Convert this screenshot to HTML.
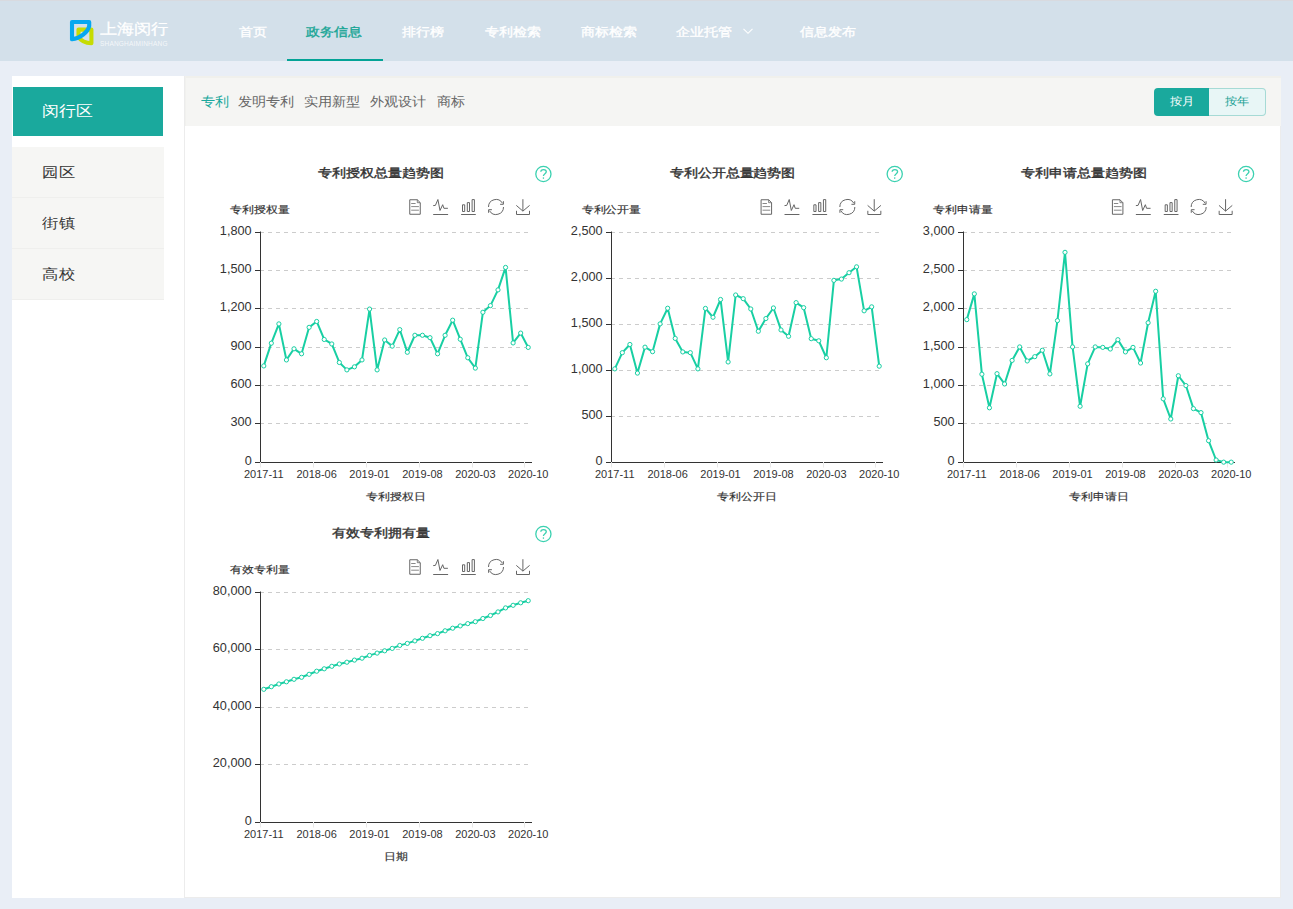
<!DOCTYPE html>
<html><head><meta charset="utf-8">
<style>
*{margin:0;padding:0;box-sizing:border-box}
html,body{width:1293px;height:909px;overflow:hidden}
body{background:#e9eef6;font-family:"Liberation Sans",sans-serif;position:relative;color:#333}
.abs{position:absolute}
.sq{display:inline-block;transform:scaleY(0.86);transform-origin:50% 50%}
#hdr{position:absolute;left:0;top:0;width:1293px;height:61px;background:#d3e0ea;border-top:1px solid #d8dadf}
.nav{position:absolute;top:21px;font-size:14px;color:#fff;white-space:nowrap;line-height:20px;font-weight:normal;-webkit-text-stroke:0.4px currentColor}
.nav.on{color:#17a595}
#uline{position:absolute;left:287px;top:58px;width:96px;height:2px;background:#04a396}
#side{position:absolute;left:12px;top:76px;width:172px;height:822px;background:#fff}
#main{position:absolute;left:184px;top:76px;width:1097px;height:822px;background:#fff;border-left:1px solid #ececec;border-right:1px solid #ececec;border-bottom:1px solid #ececec}
.sitem{position:absolute;left:0;width:152px;height:51px;background:#f6f6f4;border-bottom:1px solid #efefed;font-size:16.5px;color:#333;line-height:51px;padding-left:30px;white-space:nowrap}
#tabbar{position:absolute;left:0;top:0;width:1096px;height:50px;background:#f5f5f3;border-top:2px solid #f0f0ec;border-left:1px solid #f1f1ee}
.tab{position:absolute;top:14px;font-size:14px;color:#666;line-height:18px;white-space:nowrap}
.tab .sq{transform:scaleY(0.92)}
.btn{position:absolute;top:10px;height:28px;font-size:12px;line-height:26px;text-align:center;white-space:nowrap}
</style></head><body>
<div id="hdr">
  <svg class="abs" style="left:64px;top:13px" width="36" height="36" viewBox="64 14 36 36">
    <path d="M78.5 37.2 L78.5 29.6 L91.4 29.6 L91.4 43.3 C86.5 43.1 81.2 41.2 78.5 37.2 Z" fill="none" stroke="#c6dc02" stroke-width="4.1" stroke-linejoin="round"/>
    <path d="M72 39.3 L72 22 L89.2 22 L89.2 26 C88 32 80 38.5 72 39.3 Z" fill="none" stroke="#05a8f0" stroke-width="4.1" stroke-linejoin="round"/>
  </svg>
  <div class="abs" style="left:100px;top:18px;font-size:17px;color:#fff;line-height:22px;font-weight:normal;white-space:nowrap;-webkit-text-stroke:0.3px #fff"><span class="sq" style="transform:scaleY(0.87)">上海闵行</span></div>
  <div class="abs" style="left:100px;top:38.5px;font-size:6.5px;color:#fff;line-height:8px;letter-spacing:0.2px;white-space:nowrap;opacity:.75">SHANGHAIMINHANG</div>
  <div class="nav" style="left:239px"><span class="sq">首页</span></div>
  <div class="nav on" style="left:306px"><span class="sq">政务信息</span></div>
  <div class="nav" style="left:402px"><span class="sq">排行榜</span></div>
  <div class="nav" style="left:485px"><span class="sq">专利检索</span></div>
  <div class="nav" style="left:581px"><span class="sq">商标检索</span></div>
  <div class="nav" style="left:676px"><span class="sq">企业托管</span></div>
  <svg class="abs" style="left:742px;top:26px" width="12" height="9" viewBox="0 0 12 9"><path d="M1.5 1.8 L6 6.3 L10.5 1.8" fill="none" stroke="#fff" stroke-width="1.1"/></svg>
  <div class="nav" style="left:800px"><span class="sq">信息发布</span></div>
  <div id="uline"></div>
</div>

<div id="side">
  <div class="abs" style="left:1px;top:11px;width:150px;height:49px;background:#1aa99d;color:#fff;font-size:16.5px;line-height:49px;padding-left:28.7px;white-space:nowrap"><span class="sq" style="transform:scaleY(0.89)">闵行区</span></div>
  <div class="sitem" style="top:71px"><span class="sq">园区</span></div>
  <div class="sitem" style="top:122px"><span class="sq">街镇</span></div>
  <div class="sitem" style="top:173px"><span class="sq">高校</span></div>
</div>

<div id="main">
  <div id="tabbar">
    <div class="tab" style="left:15px;color:#1aa99d"><span class="sq">专利</span></div>
    <div class="tab" style="left:52px"><span class="sq">发明专利</span></div>
    <div class="tab" style="left:118px"><span class="sq">实用新型</span></div>
    <div class="tab" style="left:184px"><span class="sq">外观设计</span></div>
    <div class="tab" style="left:251px"><span class="sq">商标</span></div>
    <div class="btn" style="left:968px;width:55px;background:#1aa99d;color:#fff;border-radius:4px 0 0 4px"><span class="sq" style="transform:scaleY(0.9)">按月</span></div>
    <div class="btn" style="left:1023px;width:57px;background:#e8f6f6;color:#17a093;border:1px solid #a6dad5;border-left:none;border-radius:0 4px 4px 0;line-height:25px"><span class="sq" style="transform:scaleY(0.9)">按年</span></div>
  </div>
</div>
<svg id="charts" width="1293" height="909" viewBox="0 0 1293 909" style="position:absolute;left:0;top:0" font-family="Liberation Sans, sans-serif">
<text x="381.20" y="178.14" font-size="14" font-weight="normal" fill="#333" text-anchor="middle" stroke="#333" stroke-width="0.45" transform="matrix(0.98,0,0,0.84,7.624,27.696)">专利授权总量趋势图</text>
<circle cx="543.40" cy="174.00" r="7.6" fill="none" stroke="#3bd1b0" stroke-width="1.3"/>
<path d="M540.80 171.80 C540.80 168.80 546.30 168.80 546.30 171.80 C546.30 173.60 543.40 173.80 543.40 176.00" fill="none" stroke="#3bd1b0" stroke-width="1.3"/>
<circle cx="543.40" cy="178.10" r="0.8" fill="#3bd1b0"/>
<text x="230.30" y="213.92" font-size="12" font-weight="normal" fill="#333" text-anchor="start" stroke="#333" stroke-width="0.2" transform="matrix(1.0,0,0,0.84,0.000,33.536)">专利授权量</text>
<g transform="translate(0.00,0.00)" fill="none" stroke="#666" stroke-width="1"><path d="M409.75 199.75 H417.3 L420.25 202.7 V214.25 H409.75 Z"/><path d="M417.3 199.75 V202.7 H420.25" stroke-width="0.8"/><path d="M411.2 203.5 H415.6 M411.2 206.6 H418.9 M411.2 210.2 H418.9" stroke="#888"/><path d="M433.2 205.6 L435.4 205.4 L437.9 199.5 L440 210.5 L442.7 204.7 L443.9 208.3 L447.9 208.3"/><path d="M433.2 214.5 H448.1"/><path d="M462.5 211.5 V204.8 H464.7 V211.5 Z M467.3 211.5 V202.6 H469.5 V211.5 Z M472.1 211.5 V199.6 H474.4 V211.5 Z"/><path d="M461.1 214.5 H475.8"/><path d="M488.5 207 A7.5 7.5 0 0 1 502.5 203.25"/><path d="M503.5 207 A7.5 7.5 0 0 1 489.5 210.75"/><path d="M500.1 204.3 H503.4 V201.2"/><path d="M491.9 209.7 H488.6 V212.8"/><path d="M522.9 199.2 V211.1 M516.3 205.4 L522.9 211.1 L529.6 205.4 M516.5 210.8 V214.5 H529.5 V210.8"/></g>
<line x1="260.5" y1="423.5" x2="532" y2="423.5" stroke="#cccccc" stroke-dasharray="4 4" stroke-dashoffset="0.5"/>
<line x1="260.5" y1="385.5" x2="532" y2="385.5" stroke="#cccccc" stroke-dasharray="4 4" stroke-dashoffset="0.5"/>
<line x1="260.5" y1="347.5" x2="532" y2="347.5" stroke="#cccccc" stroke-dasharray="4 4" stroke-dashoffset="0.5"/>
<line x1="260.5" y1="308.5" x2="532" y2="308.5" stroke="#cccccc" stroke-dasharray="4 4" stroke-dashoffset="0.5"/>
<line x1="260.5" y1="270.5" x2="532" y2="270.5" stroke="#cccccc" stroke-dasharray="4 4" stroke-dashoffset="0.5"/>
<line x1="260.5" y1="232.5" x2="532" y2="232.5" stroke="#cccccc" stroke-dasharray="4 4" stroke-dashoffset="0.5"/>
<line x1="255" y1="462.5" x2="260" y2="462.5" stroke="#333"/>
<text x="251.70" y="464.80" font-size="12" fill="#333" text-anchor="end" transform="matrix(1.06,0,0,1,-15.102,0)">0</text>
<line x1="255" y1="423.5" x2="260" y2="423.5" stroke="#333"/>
<text x="251.70" y="425.80" font-size="12" fill="#333" text-anchor="end" transform="matrix(1.06,0,0,1,-15.102,0)">300</text>
<line x1="255" y1="385.5" x2="260" y2="385.5" stroke="#333"/>
<text x="251.70" y="387.80" font-size="12" fill="#333" text-anchor="end" transform="matrix(1.06,0,0,1,-15.102,0)">600</text>
<line x1="255" y1="347.5" x2="260" y2="347.5" stroke="#333"/>
<text x="251.70" y="349.80" font-size="12" fill="#333" text-anchor="end" transform="matrix(1.06,0,0,1,-15.102,0)">900</text>
<line x1="255" y1="308.5" x2="260" y2="308.5" stroke="#333"/>
<text x="251.70" y="310.80" font-size="12" fill="#333" text-anchor="end" transform="matrix(1.06,0,0,1,-15.102,0)">1,200</text>
<line x1="255" y1="270.5" x2="260" y2="270.5" stroke="#333"/>
<text x="251.70" y="272.80" font-size="12" fill="#333" text-anchor="end" transform="matrix(1.06,0,0,1,-15.102,0)">1,500</text>
<line x1="255" y1="232.5" x2="260" y2="232.5" stroke="#333"/>
<text x="251.70" y="234.80" font-size="12" fill="#333" text-anchor="end" transform="matrix(1.06,0,0,1,-15.102,0)">1,800</text>
<line x1="260.5" y1="231.5" x2="260.5" y2="462.5" stroke="#333"/>
<line x1="260" y1="462.5" x2="532" y2="462.5" stroke="#333"/>
<line x1="260.5" y1="462.0" x2="260.5" y2="467.5" stroke="#e8e8e8"/>
<text x="263.78" y="478.30" font-size="11" fill="#333" text-anchor="middle">2017-11</text>
<line x1="313.5" y1="462.0" x2="313.5" y2="467.5" stroke="#e8e8e8"/>
<text x="316.67" y="478.30" font-size="11" fill="#333" text-anchor="middle">2018-06</text>
<line x1="366.5" y1="462.0" x2="366.5" y2="467.5" stroke="#e8e8e8"/>
<text x="369.56" y="478.30" font-size="11" fill="#333" text-anchor="middle">2019-01</text>
<line x1="419.5" y1="462.0" x2="419.5" y2="467.5" stroke="#e8e8e8"/>
<text x="422.44" y="478.30" font-size="11" fill="#333" text-anchor="middle">2019-08</text>
<line x1="472.5" y1="462.0" x2="472.5" y2="467.5" stroke="#e8e8e8"/>
<text x="475.33" y="478.30" font-size="11" fill="#333" text-anchor="middle">2020-03</text>
<line x1="524.5" y1="462.0" x2="524.5" y2="467.5" stroke="#e8e8e8"/>
<text x="528.22" y="478.30" font-size="11" fill="#333" text-anchor="middle">2020-10</text>
<text x="396.00" y="500.52" font-size="12" font-weight="normal" fill="#333" text-anchor="middle" stroke="#333" stroke-width="0.2" transform="matrix(1.0,0,0,0.84,0.000,79.392)">专利授权日</text>
<path d="M263.78 365.93 L271.33 343.19 L278.89 323.89 L286.44 359.93 L294.00 348.81 L301.56 353.79 L309.11 327.34 L316.67 321.47 L324.22 339.48 L331.78 343.96 L339.33 362.48 L346.89 369.89 L354.44 366.83 L362.00 359.93 L369.56 309.07 L377.11 369.89 L384.67 339.99 L392.22 346.13 L399.78 329.64 L407.33 352.26 L414.89 335.27 L422.44 335.27 L430.00 337.69 L437.56 353.79 L445.11 335.27 L452.67 320.19 L460.22 339.23 L467.78 357.76 L475.33 368.11 L482.89 312.27 L490.44 305.62 L498.00 289.91 L505.56 267.42 L513.11 342.93 L520.67 333.09 L528.22 347.41" fill="none" stroke="#18cfa3" stroke-width="2" stroke-linejoin="round"/>
<circle cx="263.78" cy="365.93" r="2.1" fill="#fff" stroke="#18cfa3" stroke-width="1"/>
<circle cx="271.33" cy="343.19" r="2.1" fill="#fff" stroke="#18cfa3" stroke-width="1"/>
<circle cx="278.89" cy="323.89" r="2.1" fill="#fff" stroke="#18cfa3" stroke-width="1"/>
<circle cx="286.44" cy="359.93" r="2.1" fill="#fff" stroke="#18cfa3" stroke-width="1"/>
<circle cx="294.00" cy="348.81" r="2.1" fill="#fff" stroke="#18cfa3" stroke-width="1"/>
<circle cx="301.56" cy="353.79" r="2.1" fill="#fff" stroke="#18cfa3" stroke-width="1"/>
<circle cx="309.11" cy="327.34" r="2.1" fill="#fff" stroke="#18cfa3" stroke-width="1"/>
<circle cx="316.67" cy="321.47" r="2.1" fill="#fff" stroke="#18cfa3" stroke-width="1"/>
<circle cx="324.22" cy="339.48" r="2.1" fill="#fff" stroke="#18cfa3" stroke-width="1"/>
<circle cx="331.78" cy="343.96" r="2.1" fill="#fff" stroke="#18cfa3" stroke-width="1"/>
<circle cx="339.33" cy="362.48" r="2.1" fill="#fff" stroke="#18cfa3" stroke-width="1"/>
<circle cx="346.89" cy="369.89" r="2.1" fill="#fff" stroke="#18cfa3" stroke-width="1"/>
<circle cx="354.44" cy="366.83" r="2.1" fill="#fff" stroke="#18cfa3" stroke-width="1"/>
<circle cx="362.00" cy="359.93" r="2.1" fill="#fff" stroke="#18cfa3" stroke-width="1"/>
<circle cx="369.56" cy="309.07" r="2.1" fill="#fff" stroke="#18cfa3" stroke-width="1"/>
<circle cx="377.11" cy="369.89" r="2.1" fill="#fff" stroke="#18cfa3" stroke-width="1"/>
<circle cx="384.67" cy="339.99" r="2.1" fill="#fff" stroke="#18cfa3" stroke-width="1"/>
<circle cx="392.22" cy="346.13" r="2.1" fill="#fff" stroke="#18cfa3" stroke-width="1"/>
<circle cx="399.78" cy="329.64" r="2.1" fill="#fff" stroke="#18cfa3" stroke-width="1"/>
<circle cx="407.33" cy="352.26" r="2.1" fill="#fff" stroke="#18cfa3" stroke-width="1"/>
<circle cx="414.89" cy="335.27" r="2.1" fill="#fff" stroke="#18cfa3" stroke-width="1"/>
<circle cx="422.44" cy="335.27" r="2.1" fill="#fff" stroke="#18cfa3" stroke-width="1"/>
<circle cx="430.00" cy="337.69" r="2.1" fill="#fff" stroke="#18cfa3" stroke-width="1"/>
<circle cx="437.56" cy="353.79" r="2.1" fill="#fff" stroke="#18cfa3" stroke-width="1"/>
<circle cx="445.11" cy="335.27" r="2.1" fill="#fff" stroke="#18cfa3" stroke-width="1"/>
<circle cx="452.67" cy="320.19" r="2.1" fill="#fff" stroke="#18cfa3" stroke-width="1"/>
<circle cx="460.22" cy="339.23" r="2.1" fill="#fff" stroke="#18cfa3" stroke-width="1"/>
<circle cx="467.78" cy="357.76" r="2.1" fill="#fff" stroke="#18cfa3" stroke-width="1"/>
<circle cx="475.33" cy="368.11" r="2.1" fill="#fff" stroke="#18cfa3" stroke-width="1"/>
<circle cx="482.89" cy="312.27" r="2.1" fill="#fff" stroke="#18cfa3" stroke-width="1"/>
<circle cx="490.44" cy="305.62" r="2.1" fill="#fff" stroke="#18cfa3" stroke-width="1"/>
<circle cx="498.00" cy="289.91" r="2.1" fill="#fff" stroke="#18cfa3" stroke-width="1"/>
<circle cx="505.56" cy="267.42" r="2.1" fill="#fff" stroke="#18cfa3" stroke-width="1"/>
<circle cx="513.11" cy="342.93" r="2.1" fill="#fff" stroke="#18cfa3" stroke-width="1"/>
<circle cx="520.67" cy="333.09" r="2.1" fill="#fff" stroke="#18cfa3" stroke-width="1"/>
<circle cx="528.22" cy="347.41" r="2.1" fill="#fff" stroke="#18cfa3" stroke-width="1"/>
<text x="732.53" y="178.14" font-size="14" font-weight="normal" fill="#333" text-anchor="middle" stroke="#333" stroke-width="0.45" transform="matrix(0.98,0,0,0.84,14.651,27.696)">专利公开总量趋势图</text>
<circle cx="894.73" cy="174.00" r="7.6" fill="none" stroke="#3bd1b0" stroke-width="1.3"/>
<path d="M892.13 171.80 C892.13 168.80 897.63 168.80 897.63 171.80 C897.63 173.60 894.73 173.80 894.73 176.00" fill="none" stroke="#3bd1b0" stroke-width="1.3"/>
<circle cx="894.73" cy="178.10" r="0.8" fill="#3bd1b0"/>
<text x="581.63" y="213.92" font-size="12" font-weight="normal" fill="#333" text-anchor="start" stroke="#333" stroke-width="0.2" transform="matrix(1.0,0,0,0.84,0.000,33.536)">专利公开量</text>
<g transform="translate(351.33,0.00)" fill="none" stroke="#666" stroke-width="1"><path d="M409.75 199.75 H417.3 L420.25 202.7 V214.25 H409.75 Z"/><path d="M417.3 199.75 V202.7 H420.25" stroke-width="0.8"/><path d="M411.2 203.5 H415.6 M411.2 206.6 H418.9 M411.2 210.2 H418.9" stroke="#888"/><path d="M433.2 205.6 L435.4 205.4 L437.9 199.5 L440 210.5 L442.7 204.7 L443.9 208.3 L447.9 208.3"/><path d="M433.2 214.5 H448.1"/><path d="M462.5 211.5 V204.8 H464.7 V211.5 Z M467.3 211.5 V202.6 H469.5 V211.5 Z M472.1 211.5 V199.6 H474.4 V211.5 Z"/><path d="M461.1 214.5 H475.8"/><path d="M488.5 207 A7.5 7.5 0 0 1 502.5 203.25"/><path d="M503.5 207 A7.5 7.5 0 0 1 489.5 210.75"/><path d="M500.1 204.3 H503.4 V201.2"/><path d="M491.9 209.7 H488.6 V212.8"/><path d="M522.9 199.2 V211.1 M516.3 205.4 L522.9 211.1 L529.6 205.4 M516.5 210.8 V214.5 H529.5 V210.8"/></g>
<line x1="611.5" y1="416.5" x2="883" y2="416.5" stroke="#cccccc" stroke-dasharray="4 4" stroke-dashoffset="0.5"/>
<line x1="611.5" y1="370.5" x2="883" y2="370.5" stroke="#cccccc" stroke-dasharray="4 4" stroke-dashoffset="0.5"/>
<line x1="611.5" y1="324.5" x2="883" y2="324.5" stroke="#cccccc" stroke-dasharray="4 4" stroke-dashoffset="0.5"/>
<line x1="611.5" y1="278.5" x2="883" y2="278.5" stroke="#cccccc" stroke-dasharray="4 4" stroke-dashoffset="0.5"/>
<line x1="611.5" y1="232.5" x2="883" y2="232.5" stroke="#cccccc" stroke-dasharray="4 4" stroke-dashoffset="0.5"/>
<line x1="606" y1="462.5" x2="611" y2="462.5" stroke="#333"/>
<text x="602.70" y="464.80" font-size="12" fill="#333" text-anchor="end" transform="matrix(1.06,0,0,1,-36.162,0)">0</text>
<line x1="606" y1="416.5" x2="611" y2="416.5" stroke="#333"/>
<text x="602.70" y="418.80" font-size="12" fill="#333" text-anchor="end" transform="matrix(1.06,0,0,1,-36.162,0)">500</text>
<line x1="606" y1="370.5" x2="611" y2="370.5" stroke="#333"/>
<text x="602.70" y="372.80" font-size="12" fill="#333" text-anchor="end" transform="matrix(1.06,0,0,1,-36.162,0)">1,000</text>
<line x1="606" y1="324.5" x2="611" y2="324.5" stroke="#333"/>
<text x="602.70" y="326.80" font-size="12" fill="#333" text-anchor="end" transform="matrix(1.06,0,0,1,-36.162,0)">1,500</text>
<line x1="606" y1="278.5" x2="611" y2="278.5" stroke="#333"/>
<text x="602.70" y="280.80" font-size="12" fill="#333" text-anchor="end" transform="matrix(1.06,0,0,1,-36.162,0)">2,000</text>
<line x1="606" y1="232.5" x2="611" y2="232.5" stroke="#333"/>
<text x="602.70" y="234.80" font-size="12" fill="#333" text-anchor="end" transform="matrix(1.06,0,0,1,-36.162,0)">2,500</text>
<line x1="611.5" y1="231.5" x2="611.5" y2="462.5" stroke="#333"/>
<line x1="611" y1="462.5" x2="883" y2="462.5" stroke="#333"/>
<line x1="611.5" y1="462.0" x2="611.5" y2="467.5" stroke="#e8e8e8"/>
<text x="614.78" y="478.30" font-size="11" fill="#333" text-anchor="middle">2017-11</text>
<line x1="664.5" y1="462.0" x2="664.5" y2="467.5" stroke="#e8e8e8"/>
<text x="667.67" y="478.30" font-size="11" fill="#333" text-anchor="middle">2018-06</text>
<line x1="717.5" y1="462.0" x2="717.5" y2="467.5" stroke="#e8e8e8"/>
<text x="720.56" y="478.30" font-size="11" fill="#333" text-anchor="middle">2019-01</text>
<line x1="770.5" y1="462.0" x2="770.5" y2="467.5" stroke="#e8e8e8"/>
<text x="773.44" y="478.30" font-size="11" fill="#333" text-anchor="middle">2019-08</text>
<line x1="823.5" y1="462.0" x2="823.5" y2="467.5" stroke="#e8e8e8"/>
<text x="826.33" y="478.30" font-size="11" fill="#333" text-anchor="middle">2020-03</text>
<line x1="875.5" y1="462.0" x2="875.5" y2="467.5" stroke="#e8e8e8"/>
<text x="879.22" y="478.30" font-size="11" fill="#333" text-anchor="middle">2020-10</text>
<text x="747.00" y="500.52" font-size="12" font-weight="normal" fill="#333" text-anchor="middle" stroke="#333" stroke-width="0.2" transform="matrix(1.0,0,0,0.84,0.000,79.392)">专利公开日</text>
<path d="M614.78 368.86 L622.33 352.67 L629.89 344.48 L637.44 373.09 L645.00 347.15 L652.56 351.66 L660.11 323.87 L667.67 308.23 L675.22 338.41 L682.78 351.93 L690.33 352.67 L697.89 368.86 L705.44 308.42 L713.00 317.25 L720.56 299.49 L728.11 361.96 L735.67 294.99 L743.22 298.67 L750.78 308.97 L758.33 331.23 L765.89 318.54 L773.44 307.96 L781.00 329.95 L788.56 336.29 L796.11 302.62 L803.67 307.68 L811.22 338.69 L818.78 340.80 L826.33 357.73 L833.89 280.36 L841.44 279.07 L849.00 272.72 L856.56 266.83 L864.11 310.81 L871.67 306.85 L879.22 366.19" fill="none" stroke="#18cfa3" stroke-width="2" stroke-linejoin="round"/>
<circle cx="614.78" cy="368.86" r="2.1" fill="#fff" stroke="#18cfa3" stroke-width="1"/>
<circle cx="622.33" cy="352.67" r="2.1" fill="#fff" stroke="#18cfa3" stroke-width="1"/>
<circle cx="629.89" cy="344.48" r="2.1" fill="#fff" stroke="#18cfa3" stroke-width="1"/>
<circle cx="637.44" cy="373.09" r="2.1" fill="#fff" stroke="#18cfa3" stroke-width="1"/>
<circle cx="645.00" cy="347.15" r="2.1" fill="#fff" stroke="#18cfa3" stroke-width="1"/>
<circle cx="652.56" cy="351.66" r="2.1" fill="#fff" stroke="#18cfa3" stroke-width="1"/>
<circle cx="660.11" cy="323.87" r="2.1" fill="#fff" stroke="#18cfa3" stroke-width="1"/>
<circle cx="667.67" cy="308.23" r="2.1" fill="#fff" stroke="#18cfa3" stroke-width="1"/>
<circle cx="675.22" cy="338.41" r="2.1" fill="#fff" stroke="#18cfa3" stroke-width="1"/>
<circle cx="682.78" cy="351.93" r="2.1" fill="#fff" stroke="#18cfa3" stroke-width="1"/>
<circle cx="690.33" cy="352.67" r="2.1" fill="#fff" stroke="#18cfa3" stroke-width="1"/>
<circle cx="697.89" cy="368.86" r="2.1" fill="#fff" stroke="#18cfa3" stroke-width="1"/>
<circle cx="705.44" cy="308.42" r="2.1" fill="#fff" stroke="#18cfa3" stroke-width="1"/>
<circle cx="713.00" cy="317.25" r="2.1" fill="#fff" stroke="#18cfa3" stroke-width="1"/>
<circle cx="720.56" cy="299.49" r="2.1" fill="#fff" stroke="#18cfa3" stroke-width="1"/>
<circle cx="728.11" cy="361.96" r="2.1" fill="#fff" stroke="#18cfa3" stroke-width="1"/>
<circle cx="735.67" cy="294.99" r="2.1" fill="#fff" stroke="#18cfa3" stroke-width="1"/>
<circle cx="743.22" cy="298.67" r="2.1" fill="#fff" stroke="#18cfa3" stroke-width="1"/>
<circle cx="750.78" cy="308.97" r="2.1" fill="#fff" stroke="#18cfa3" stroke-width="1"/>
<circle cx="758.33" cy="331.23" r="2.1" fill="#fff" stroke="#18cfa3" stroke-width="1"/>
<circle cx="765.89" cy="318.54" r="2.1" fill="#fff" stroke="#18cfa3" stroke-width="1"/>
<circle cx="773.44" cy="307.96" r="2.1" fill="#fff" stroke="#18cfa3" stroke-width="1"/>
<circle cx="781.00" cy="329.95" r="2.1" fill="#fff" stroke="#18cfa3" stroke-width="1"/>
<circle cx="788.56" cy="336.29" r="2.1" fill="#fff" stroke="#18cfa3" stroke-width="1"/>
<circle cx="796.11" cy="302.62" r="2.1" fill="#fff" stroke="#18cfa3" stroke-width="1"/>
<circle cx="803.67" cy="307.68" r="2.1" fill="#fff" stroke="#18cfa3" stroke-width="1"/>
<circle cx="811.22" cy="338.69" r="2.1" fill="#fff" stroke="#18cfa3" stroke-width="1"/>
<circle cx="818.78" cy="340.80" r="2.1" fill="#fff" stroke="#18cfa3" stroke-width="1"/>
<circle cx="826.33" cy="357.73" r="2.1" fill="#fff" stroke="#18cfa3" stroke-width="1"/>
<circle cx="833.89" cy="280.36" r="2.1" fill="#fff" stroke="#18cfa3" stroke-width="1"/>
<circle cx="841.44" cy="279.07" r="2.1" fill="#fff" stroke="#18cfa3" stroke-width="1"/>
<circle cx="849.00" cy="272.72" r="2.1" fill="#fff" stroke="#18cfa3" stroke-width="1"/>
<circle cx="856.56" cy="266.83" r="2.1" fill="#fff" stroke="#18cfa3" stroke-width="1"/>
<circle cx="864.11" cy="310.81" r="2.1" fill="#fff" stroke="#18cfa3" stroke-width="1"/>
<circle cx="871.67" cy="306.85" r="2.1" fill="#fff" stroke="#18cfa3" stroke-width="1"/>
<circle cx="879.22" cy="366.19" r="2.1" fill="#fff" stroke="#18cfa3" stroke-width="1"/>
<text x="1083.87" y="178.14" font-size="14" font-weight="normal" fill="#333" text-anchor="middle" stroke="#333" stroke-width="0.45" transform="matrix(0.98,0,0,0.84,21.677,27.696)">专利申请总量趋势图</text>
<circle cx="1246.07" cy="174.00" r="7.6" fill="none" stroke="#3bd1b0" stroke-width="1.3"/>
<path d="M1243.47 171.80 C1243.47 168.80 1248.97 168.80 1248.97 171.80 C1248.97 173.60 1246.07 173.80 1246.07 176.00" fill="none" stroke="#3bd1b0" stroke-width="1.3"/>
<circle cx="1246.07" cy="178.10" r="0.8" fill="#3bd1b0"/>
<text x="932.97" y="213.92" font-size="12" font-weight="normal" fill="#333" text-anchor="start" stroke="#333" stroke-width="0.2" transform="matrix(1.0,0,0,0.84,0.000,33.536)">专利申请量</text>
<g transform="translate(702.67,0.00)" fill="none" stroke="#666" stroke-width="1"><path d="M409.75 199.75 H417.3 L420.25 202.7 V214.25 H409.75 Z"/><path d="M417.3 199.75 V202.7 H420.25" stroke-width="0.8"/><path d="M411.2 203.5 H415.6 M411.2 206.6 H418.9 M411.2 210.2 H418.9" stroke="#888"/><path d="M433.2 205.6 L435.4 205.4 L437.9 199.5 L440 210.5 L442.7 204.7 L443.9 208.3 L447.9 208.3"/><path d="M433.2 214.5 H448.1"/><path d="M462.5 211.5 V204.8 H464.7 V211.5 Z M467.3 211.5 V202.6 H469.5 V211.5 Z M472.1 211.5 V199.6 H474.4 V211.5 Z"/><path d="M461.1 214.5 H475.8"/><path d="M488.5 207 A7.5 7.5 0 0 1 502.5 203.25"/><path d="M503.5 207 A7.5 7.5 0 0 1 489.5 210.75"/><path d="M500.1 204.3 H503.4 V201.2"/><path d="M491.9 209.7 H488.6 V212.8"/><path d="M522.9 199.2 V211.1 M516.3 205.4 L522.9 211.1 L529.6 205.4 M516.5 210.8 V214.5 H529.5 V210.8"/></g>
<line x1="963.5" y1="423.5" x2="1235" y2="423.5" stroke="#cccccc" stroke-dasharray="4 4" stroke-dashoffset="0.5"/>
<line x1="963.5" y1="385.5" x2="1235" y2="385.5" stroke="#cccccc" stroke-dasharray="4 4" stroke-dashoffset="0.5"/>
<line x1="963.5" y1="347.5" x2="1235" y2="347.5" stroke="#cccccc" stroke-dasharray="4 4" stroke-dashoffset="0.5"/>
<line x1="963.5" y1="308.5" x2="1235" y2="308.5" stroke="#cccccc" stroke-dasharray="4 4" stroke-dashoffset="0.5"/>
<line x1="963.5" y1="270.5" x2="1235" y2="270.5" stroke="#cccccc" stroke-dasharray="4 4" stroke-dashoffset="0.5"/>
<line x1="963.5" y1="232.5" x2="1235" y2="232.5" stroke="#cccccc" stroke-dasharray="4 4" stroke-dashoffset="0.5"/>
<line x1="958" y1="462.5" x2="963" y2="462.5" stroke="#333"/>
<text x="954.70" y="464.80" font-size="12" fill="#333" text-anchor="end" transform="matrix(1.06,0,0,1,-57.282,0)">0</text>
<line x1="958" y1="423.5" x2="963" y2="423.5" stroke="#333"/>
<text x="954.70" y="425.80" font-size="12" fill="#333" text-anchor="end" transform="matrix(1.06,0,0,1,-57.282,0)">500</text>
<line x1="958" y1="385.5" x2="963" y2="385.5" stroke="#333"/>
<text x="954.70" y="387.80" font-size="12" fill="#333" text-anchor="end" transform="matrix(1.06,0,0,1,-57.282,0)">1,000</text>
<line x1="958" y1="347.5" x2="963" y2="347.5" stroke="#333"/>
<text x="954.70" y="349.80" font-size="12" fill="#333" text-anchor="end" transform="matrix(1.06,0,0,1,-57.282,0)">1,500</text>
<line x1="958" y1="308.5" x2="963" y2="308.5" stroke="#333"/>
<text x="954.70" y="310.80" font-size="12" fill="#333" text-anchor="end" transform="matrix(1.06,0,0,1,-57.282,0)">2,000</text>
<line x1="958" y1="270.5" x2="963" y2="270.5" stroke="#333"/>
<text x="954.70" y="272.80" font-size="12" fill="#333" text-anchor="end" transform="matrix(1.06,0,0,1,-57.282,0)">2,500</text>
<line x1="958" y1="232.5" x2="963" y2="232.5" stroke="#333"/>
<text x="954.70" y="234.80" font-size="12" fill="#333" text-anchor="end" transform="matrix(1.06,0,0,1,-57.282,0)">3,000</text>
<line x1="963.5" y1="231.5" x2="963.5" y2="462.5" stroke="#333"/>
<line x1="963" y1="462.5" x2="1235" y2="462.5" stroke="#333"/>
<line x1="963.5" y1="462.0" x2="963.5" y2="467.5" stroke="#e8e8e8"/>
<text x="966.78" y="478.30" font-size="11" fill="#333" text-anchor="middle">2017-11</text>
<line x1="1016.5" y1="462.0" x2="1016.5" y2="467.5" stroke="#e8e8e8"/>
<text x="1019.67" y="478.30" font-size="11" fill="#333" text-anchor="middle">2018-06</text>
<line x1="1069.5" y1="462.0" x2="1069.5" y2="467.5" stroke="#e8e8e8"/>
<text x="1072.56" y="478.30" font-size="11" fill="#333" text-anchor="middle">2019-01</text>
<line x1="1122.5" y1="462.0" x2="1122.5" y2="467.5" stroke="#e8e8e8"/>
<text x="1125.44" y="478.30" font-size="11" fill="#333" text-anchor="middle">2019-08</text>
<line x1="1175.5" y1="462.0" x2="1175.5" y2="467.5" stroke="#e8e8e8"/>
<text x="1178.33" y="478.30" font-size="11" fill="#333" text-anchor="middle">2020-03</text>
<line x1="1227.5" y1="462.0" x2="1227.5" y2="467.5" stroke="#e8e8e8"/>
<text x="1231.22" y="478.30" font-size="11" fill="#333" text-anchor="middle">2020-10</text>
<text x="1099.00" y="500.52" font-size="12" font-weight="normal" fill="#333" text-anchor="middle" stroke="#333" stroke-width="0.2" transform="matrix(1.0,0,0,0.84,0.000,79.392)">专利申请日</text>
<path d="M966.78 319.63 L974.33 293.87 L981.89 374.21 L989.44 407.79 L997.00 373.68 L1004.56 383.95 L1012.11 360.41 L1019.67 346.92 L1027.22 360.95 L1034.78 356.66 L1042.33 350.29 L1049.89 373.91 L1057.44 320.62 L1065.00 252.31 L1072.56 346.92 L1080.11 406.26 L1087.67 363.86 L1095.22 346.92 L1102.78 347.38 L1110.33 348.99 L1117.89 339.71 L1125.44 351.90 L1133.00 347.38 L1140.56 363.02 L1148.11 322.77 L1155.67 291.26 L1163.22 398.82 L1170.78 418.99 L1178.33 375.75 L1185.89 385.56 L1193.44 408.64 L1201.00 412.62 L1208.56 440.68 L1216.11 460.00 L1223.67 462.15 L1231.22 462.15" fill="none" stroke="#18cfa3" stroke-width="2" stroke-linejoin="round"/>
<circle cx="966.78" cy="319.63" r="2.1" fill="#fff" stroke="#18cfa3" stroke-width="1"/>
<circle cx="974.33" cy="293.87" r="2.1" fill="#fff" stroke="#18cfa3" stroke-width="1"/>
<circle cx="981.89" cy="374.21" r="2.1" fill="#fff" stroke="#18cfa3" stroke-width="1"/>
<circle cx="989.44" cy="407.79" r="2.1" fill="#fff" stroke="#18cfa3" stroke-width="1"/>
<circle cx="997.00" cy="373.68" r="2.1" fill="#fff" stroke="#18cfa3" stroke-width="1"/>
<circle cx="1004.56" cy="383.95" r="2.1" fill="#fff" stroke="#18cfa3" stroke-width="1"/>
<circle cx="1012.11" cy="360.41" r="2.1" fill="#fff" stroke="#18cfa3" stroke-width="1"/>
<circle cx="1019.67" cy="346.92" r="2.1" fill="#fff" stroke="#18cfa3" stroke-width="1"/>
<circle cx="1027.22" cy="360.95" r="2.1" fill="#fff" stroke="#18cfa3" stroke-width="1"/>
<circle cx="1034.78" cy="356.66" r="2.1" fill="#fff" stroke="#18cfa3" stroke-width="1"/>
<circle cx="1042.33" cy="350.29" r="2.1" fill="#fff" stroke="#18cfa3" stroke-width="1"/>
<circle cx="1049.89" cy="373.91" r="2.1" fill="#fff" stroke="#18cfa3" stroke-width="1"/>
<circle cx="1057.44" cy="320.62" r="2.1" fill="#fff" stroke="#18cfa3" stroke-width="1"/>
<circle cx="1065.00" cy="252.31" r="2.1" fill="#fff" stroke="#18cfa3" stroke-width="1"/>
<circle cx="1072.56" cy="346.92" r="2.1" fill="#fff" stroke="#18cfa3" stroke-width="1"/>
<circle cx="1080.11" cy="406.26" r="2.1" fill="#fff" stroke="#18cfa3" stroke-width="1"/>
<circle cx="1087.67" cy="363.86" r="2.1" fill="#fff" stroke="#18cfa3" stroke-width="1"/>
<circle cx="1095.22" cy="346.92" r="2.1" fill="#fff" stroke="#18cfa3" stroke-width="1"/>
<circle cx="1102.78" cy="347.38" r="2.1" fill="#fff" stroke="#18cfa3" stroke-width="1"/>
<circle cx="1110.33" cy="348.99" r="2.1" fill="#fff" stroke="#18cfa3" stroke-width="1"/>
<circle cx="1117.89" cy="339.71" r="2.1" fill="#fff" stroke="#18cfa3" stroke-width="1"/>
<circle cx="1125.44" cy="351.90" r="2.1" fill="#fff" stroke="#18cfa3" stroke-width="1"/>
<circle cx="1133.00" cy="347.38" r="2.1" fill="#fff" stroke="#18cfa3" stroke-width="1"/>
<circle cx="1140.56" cy="363.02" r="2.1" fill="#fff" stroke="#18cfa3" stroke-width="1"/>
<circle cx="1148.11" cy="322.77" r="2.1" fill="#fff" stroke="#18cfa3" stroke-width="1"/>
<circle cx="1155.67" cy="291.26" r="2.1" fill="#fff" stroke="#18cfa3" stroke-width="1"/>
<circle cx="1163.22" cy="398.82" r="2.1" fill="#fff" stroke="#18cfa3" stroke-width="1"/>
<circle cx="1170.78" cy="418.99" r="2.1" fill="#fff" stroke="#18cfa3" stroke-width="1"/>
<circle cx="1178.33" cy="375.75" r="2.1" fill="#fff" stroke="#18cfa3" stroke-width="1"/>
<circle cx="1185.89" cy="385.56" r="2.1" fill="#fff" stroke="#18cfa3" stroke-width="1"/>
<circle cx="1193.44" cy="408.64" r="2.1" fill="#fff" stroke="#18cfa3" stroke-width="1"/>
<circle cx="1201.00" cy="412.62" r="2.1" fill="#fff" stroke="#18cfa3" stroke-width="1"/>
<circle cx="1208.56" cy="440.68" r="2.1" fill="#fff" stroke="#18cfa3" stroke-width="1"/>
<circle cx="1216.11" cy="460.00" r="2.1" fill="#fff" stroke="#18cfa3" stroke-width="1"/>
<circle cx="1223.67" cy="462.15" r="2.1" fill="#fff" stroke="#18cfa3" stroke-width="1"/>
<circle cx="1231.22" cy="462.15" r="2.1" fill="#fff" stroke="#18cfa3" stroke-width="1"/>
<text x="381.20" y="538.14" font-size="14" font-weight="normal" fill="#333" text-anchor="middle" stroke="#333" stroke-width="0.45" transform="matrix(0.98,0,0,0.84,7.624,85.296)">有效专利拥有量</text>
<circle cx="543.40" cy="534.00" r="7.6" fill="none" stroke="#3bd1b0" stroke-width="1.3"/>
<path d="M540.80 531.80 C540.80 528.80 546.30 528.80 546.30 531.80 C546.30 533.60 543.40 533.80 543.40 536.00" fill="none" stroke="#3bd1b0" stroke-width="1.3"/>
<circle cx="543.40" cy="538.10" r="0.8" fill="#3bd1b0"/>
<text x="230.30" y="573.92" font-size="12" font-weight="normal" fill="#333" text-anchor="start" stroke="#333" stroke-width="0.2" transform="matrix(1.0,0,0,0.84,0.000,91.136)">有效专利量</text>
<g transform="translate(0.00,360.00)" fill="none" stroke="#666" stroke-width="1"><path d="M409.75 199.75 H417.3 L420.25 202.7 V214.25 H409.75 Z"/><path d="M417.3 199.75 V202.7 H420.25" stroke-width="0.8"/><path d="M411.2 203.5 H415.6 M411.2 206.6 H418.9 M411.2 210.2 H418.9" stroke="#888"/><path d="M433.2 205.6 L435.4 205.4 L437.9 199.5 L440 210.5 L442.7 204.7 L443.9 208.3 L447.9 208.3"/><path d="M433.2 214.5 H448.1"/><path d="M462.5 211.5 V204.8 H464.7 V211.5 Z M467.3 211.5 V202.6 H469.5 V211.5 Z M472.1 211.5 V199.6 H474.4 V211.5 Z"/><path d="M461.1 214.5 H475.8"/><path d="M488.5 207 A7.5 7.5 0 0 1 502.5 203.25"/><path d="M503.5 207 A7.5 7.5 0 0 1 489.5 210.75"/><path d="M500.1 204.3 H503.4 V201.2"/><path d="M491.9 209.7 H488.6 V212.8"/><path d="M522.9 199.2 V211.1 M516.3 205.4 L522.9 211.1 L529.6 205.4 M516.5 210.8 V214.5 H529.5 V210.8"/></g>
<line x1="260.5" y1="764.5" x2="532" y2="764.5" stroke="#cccccc" stroke-dasharray="4 4" stroke-dashoffset="0.5"/>
<line x1="260.5" y1="707.5" x2="532" y2="707.5" stroke="#cccccc" stroke-dasharray="4 4" stroke-dashoffset="0.5"/>
<line x1="260.5" y1="649.5" x2="532" y2="649.5" stroke="#cccccc" stroke-dasharray="4 4" stroke-dashoffset="0.5"/>
<line x1="260.5" y1="592.5" x2="532" y2="592.5" stroke="#cccccc" stroke-dasharray="4 4" stroke-dashoffset="0.5"/>
<line x1="255" y1="822.5" x2="260" y2="822.5" stroke="#333"/>
<text x="251.70" y="824.80" font-size="12" fill="#333" text-anchor="end" transform="matrix(1.06,0,0,1,-15.102,0)">0</text>
<line x1="255" y1="764.5" x2="260" y2="764.5" stroke="#333"/>
<text x="251.70" y="766.80" font-size="12" fill="#333" text-anchor="end" transform="matrix(1.06,0,0,1,-15.102,0)">20,000</text>
<line x1="255" y1="707.5" x2="260" y2="707.5" stroke="#333"/>
<text x="251.70" y="709.80" font-size="12" fill="#333" text-anchor="end" transform="matrix(1.06,0,0,1,-15.102,0)">40,000</text>
<line x1="255" y1="649.5" x2="260" y2="649.5" stroke="#333"/>
<text x="251.70" y="651.80" font-size="12" fill="#333" text-anchor="end" transform="matrix(1.06,0,0,1,-15.102,0)">60,000</text>
<line x1="255" y1="592.5" x2="260" y2="592.5" stroke="#333"/>
<text x="251.70" y="594.80" font-size="12" fill="#333" text-anchor="end" transform="matrix(1.06,0,0,1,-15.102,0)">80,000</text>
<line x1="260.5" y1="591.5" x2="260.5" y2="822.5" stroke="#333"/>
<line x1="260" y1="822.5" x2="532" y2="822.5" stroke="#333"/>
<line x1="260.5" y1="822.0" x2="260.5" y2="827.5" stroke="#e8e8e8"/>
<text x="263.78" y="838.30" font-size="11" fill="#333" text-anchor="middle">2017-11</text>
<line x1="313.5" y1="822.0" x2="313.5" y2="827.5" stroke="#e8e8e8"/>
<text x="316.67" y="838.30" font-size="11" fill="#333" text-anchor="middle">2018-06</text>
<line x1="366.5" y1="822.0" x2="366.5" y2="827.5" stroke="#e8e8e8"/>
<text x="369.56" y="838.30" font-size="11" fill="#333" text-anchor="middle">2019-01</text>
<line x1="419.5" y1="822.0" x2="419.5" y2="827.5" stroke="#e8e8e8"/>
<text x="422.44" y="838.30" font-size="11" fill="#333" text-anchor="middle">2019-08</text>
<line x1="472.5" y1="822.0" x2="472.5" y2="827.5" stroke="#e8e8e8"/>
<text x="475.33" y="838.30" font-size="11" fill="#333" text-anchor="middle">2020-03</text>
<line x1="524.5" y1="822.0" x2="524.5" y2="827.5" stroke="#e8e8e8"/>
<text x="528.22" y="838.30" font-size="11" fill="#333" text-anchor="middle">2020-10</text>
<text x="396.00" y="860.52" font-size="12" font-weight="normal" fill="#333" text-anchor="middle" stroke="#333" stroke-width="0.2" transform="matrix(1.0,0,0,0.84,0.000,136.992)">日期</text>
<path d="M263.78 689.30 L271.33 686.70 L278.89 684.00 L286.44 681.80 L294.00 679.30 L301.56 677.30 L309.11 674.30 L316.67 671.20 L324.22 668.80 L331.78 666.30 L339.33 664.00 L346.89 662.20 L354.44 660.10 L362.00 658.20 L369.56 655.40 L377.11 653.10 L384.67 650.80 L392.22 648.40 L399.78 645.40 L407.33 643.40 L414.89 640.90 L422.44 638.30 L430.00 635.70 L437.56 633.60 L445.11 630.80 L452.67 628.20 L460.22 625.90 L467.78 623.60 L475.33 621.70 L482.89 618.50 L490.44 615.50 L498.00 611.90 L505.56 607.90 L513.11 605.30 L520.67 602.80 L528.22 600.70" fill="none" stroke="#18cfa3" stroke-width="2" stroke-linejoin="round"/>
<circle cx="263.78" cy="689.30" r="2.1" fill="#fff" stroke="#18cfa3" stroke-width="1"/>
<circle cx="271.33" cy="686.70" r="2.1" fill="#fff" stroke="#18cfa3" stroke-width="1"/>
<circle cx="278.89" cy="684.00" r="2.1" fill="#fff" stroke="#18cfa3" stroke-width="1"/>
<circle cx="286.44" cy="681.80" r="2.1" fill="#fff" stroke="#18cfa3" stroke-width="1"/>
<circle cx="294.00" cy="679.30" r="2.1" fill="#fff" stroke="#18cfa3" stroke-width="1"/>
<circle cx="301.56" cy="677.30" r="2.1" fill="#fff" stroke="#18cfa3" stroke-width="1"/>
<circle cx="309.11" cy="674.30" r="2.1" fill="#fff" stroke="#18cfa3" stroke-width="1"/>
<circle cx="316.67" cy="671.20" r="2.1" fill="#fff" stroke="#18cfa3" stroke-width="1"/>
<circle cx="324.22" cy="668.80" r="2.1" fill="#fff" stroke="#18cfa3" stroke-width="1"/>
<circle cx="331.78" cy="666.30" r="2.1" fill="#fff" stroke="#18cfa3" stroke-width="1"/>
<circle cx="339.33" cy="664.00" r="2.1" fill="#fff" stroke="#18cfa3" stroke-width="1"/>
<circle cx="346.89" cy="662.20" r="2.1" fill="#fff" stroke="#18cfa3" stroke-width="1"/>
<circle cx="354.44" cy="660.10" r="2.1" fill="#fff" stroke="#18cfa3" stroke-width="1"/>
<circle cx="362.00" cy="658.20" r="2.1" fill="#fff" stroke="#18cfa3" stroke-width="1"/>
<circle cx="369.56" cy="655.40" r="2.1" fill="#fff" stroke="#18cfa3" stroke-width="1"/>
<circle cx="377.11" cy="653.10" r="2.1" fill="#fff" stroke="#18cfa3" stroke-width="1"/>
<circle cx="384.67" cy="650.80" r="2.1" fill="#fff" stroke="#18cfa3" stroke-width="1"/>
<circle cx="392.22" cy="648.40" r="2.1" fill="#fff" stroke="#18cfa3" stroke-width="1"/>
<circle cx="399.78" cy="645.40" r="2.1" fill="#fff" stroke="#18cfa3" stroke-width="1"/>
<circle cx="407.33" cy="643.40" r="2.1" fill="#fff" stroke="#18cfa3" stroke-width="1"/>
<circle cx="414.89" cy="640.90" r="2.1" fill="#fff" stroke="#18cfa3" stroke-width="1"/>
<circle cx="422.44" cy="638.30" r="2.1" fill="#fff" stroke="#18cfa3" stroke-width="1"/>
<circle cx="430.00" cy="635.70" r="2.1" fill="#fff" stroke="#18cfa3" stroke-width="1"/>
<circle cx="437.56" cy="633.60" r="2.1" fill="#fff" stroke="#18cfa3" stroke-width="1"/>
<circle cx="445.11" cy="630.80" r="2.1" fill="#fff" stroke="#18cfa3" stroke-width="1"/>
<circle cx="452.67" cy="628.20" r="2.1" fill="#fff" stroke="#18cfa3" stroke-width="1"/>
<circle cx="460.22" cy="625.90" r="2.1" fill="#fff" stroke="#18cfa3" stroke-width="1"/>
<circle cx="467.78" cy="623.60" r="2.1" fill="#fff" stroke="#18cfa3" stroke-width="1"/>
<circle cx="475.33" cy="621.70" r="2.1" fill="#fff" stroke="#18cfa3" stroke-width="1"/>
<circle cx="482.89" cy="618.50" r="2.1" fill="#fff" stroke="#18cfa3" stroke-width="1"/>
<circle cx="490.44" cy="615.50" r="2.1" fill="#fff" stroke="#18cfa3" stroke-width="1"/>
<circle cx="498.00" cy="611.90" r="2.1" fill="#fff" stroke="#18cfa3" stroke-width="1"/>
<circle cx="505.56" cy="607.90" r="2.1" fill="#fff" stroke="#18cfa3" stroke-width="1"/>
<circle cx="513.11" cy="605.30" r="2.1" fill="#fff" stroke="#18cfa3" stroke-width="1"/>
<circle cx="520.67" cy="602.80" r="2.1" fill="#fff" stroke="#18cfa3" stroke-width="1"/>
<circle cx="528.22" cy="600.70" r="2.1" fill="#fff" stroke="#18cfa3" stroke-width="1"/>
</svg>
</body></html>
